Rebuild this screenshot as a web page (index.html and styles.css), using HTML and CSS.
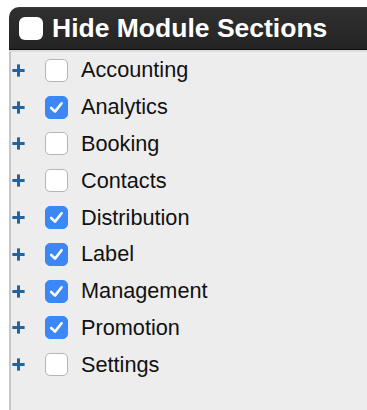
FILE: index.html
```html
<!DOCTYPE html>
<html>
<head>
<meta charset="utf-8">
<link rel="stylesheet" href="styles.css">
</head>
<body>
<div class="panel">
  <div class="header">
    <span class="hbox"></span>
    <span class="htitle">Hide Module Sections</span>
  </div>
  <div class="strip"></div>
  <ul class="list">
    <li class="row"><svg class="plus" viewBox="0 0 13 13"><path d="M6.5 0.5V12.5M0.5 6.5H12.5"/></svg><span class="box"></span><span class="label">Accounting</span></li>
    <li class="row"><svg class="plus" viewBox="0 0 13 13"><path d="M6.5 0.5V12.5M0.5 6.5H12.5"/></svg><span class="box on"><svg viewBox="0 0 21 21"><path d="M5.2 11L9 14.6L15.6 6.2"/></svg></span><span class="label">Analytics</span></li>
    <li class="row"><svg class="plus" viewBox="0 0 13 13"><path d="M6.5 0.5V12.5M0.5 6.5H12.5"/></svg><span class="box"></span><span class="label">Booking</span></li>
    <li class="row"><svg class="plus" viewBox="0 0 13 13"><path d="M6.5 0.5V12.5M0.5 6.5H12.5"/></svg><span class="box"></span><span class="label">Contacts</span></li>
    <li class="row"><svg class="plus" viewBox="0 0 13 13"><path d="M6.5 0.5V12.5M0.5 6.5H12.5"/></svg><span class="box on"><svg viewBox="0 0 21 21"><path d="M5.2 11L9 14.6L15.6 6.2"/></svg></span><span class="label">Distribution</span></li>
    <li class="row"><svg class="plus" viewBox="0 0 13 13"><path d="M6.5 0.5V12.5M0.5 6.5H12.5"/></svg><span class="box on"><svg viewBox="0 0 21 21"><path d="M5.2 11L9 14.6L15.6 6.2"/></svg></span><span class="label">Label</span></li>
    <li class="row"><svg class="plus" viewBox="0 0 13 13"><path d="M6.5 0.5V12.5M0.5 6.5H12.5"/></svg><span class="box on"><svg viewBox="0 0 21 21"><path d="M5.2 11L9 14.6L15.6 6.2"/></svg></span><span class="label">Management</span></li>
    <li class="row"><svg class="plus" viewBox="0 0 13 13"><path d="M6.5 0.5V12.5M0.5 6.5H12.5"/></svg><span class="box on"><svg viewBox="0 0 21 21"><path d="M5.2 11L9 14.6L15.6 6.2"/></svg></span><span class="label">Promotion</span></li>
    <li class="row"><svg class="plus" viewBox="0 0 13 13"><path d="M6.5 0.5V12.5M0.5 6.5H12.5"/></svg><span class="box"></span><span class="label">Settings</span></li>
  </ul>
</div>
</body>
</html>
```
FILE: styles.css
```css
html, body {
  margin: 0;
  padding: 0;
  background: #ffffff;
  overflow: hidden;
  height: 410px;
}
.panel {
  margin: 7px 0 0 9px;
  height: 403px;
  display: flex;
  flex-direction: column;
  overflow: hidden;
  font-family: "Liberation Sans", Arial, sans-serif;
}
.header {
  height: 42px;
  border-top-left-radius: 10px;
  background: linear-gradient(#3a3a3a 0, #2f2f2f 3px, #242424 100%);
  border-bottom: 1px solid #0c0c0c;
  display: flex;
  align-items: center;
  padding-left: 10px;
  gap: 9px;
  flex-shrink: 0;
  white-space: nowrap;
}
.hbox {
  width: 24px;
  height: 23px;
  border-radius: 6px;
  background: #ffffff;
  margin-top: 1px;
  flex-shrink: 0;
}
.htitle {
  color: #ffffff;
  font-weight: bold;
  font-size: 26.5px;
}
.strip {
  height: 2px;
  background: #dcdcdc;
  flex-shrink: 0;
}
.list {
  list-style: none;
  margin: 0;
  padding: 0;
  flex: 1;
  background: #ededed;
  border-left: 2px solid #c7c7c7;
}
.row {
  height: 36.8px;
  display: flex;
  align-items: center;
  padding-left: 1px;
}
.plus {
  width: 13px;
  height: 13px;
  margin-right: 20px;
  flex-shrink: 0;
}
.plus path {
  stroke: #22649b;
  stroke-width: 3;
  fill: none;
  filter: drop-shadow(0 0 0.7px #7fb2dc);
}
.box {
  width: 21px;
  height: 21px;
  border: 1px solid #b5b5b5;
  border-radius: 5px;
  background: #ffffff;
  margin-right: 13px;
  flex-shrink: 0;
  display: flex;
}
.box.on {
  background: #3b87f6;
  border-color: #3b87f6;
}
.box svg {
  width: 21px;
  height: 21px;
}
.box svg path {
  stroke: #ffffff;
  stroke-width: 2.6;
  fill: none;
  stroke-linecap: round;
  stroke-linejoin: round;
}
.label {
  font-size: 21.7px;
  color: #111111;
}
```
